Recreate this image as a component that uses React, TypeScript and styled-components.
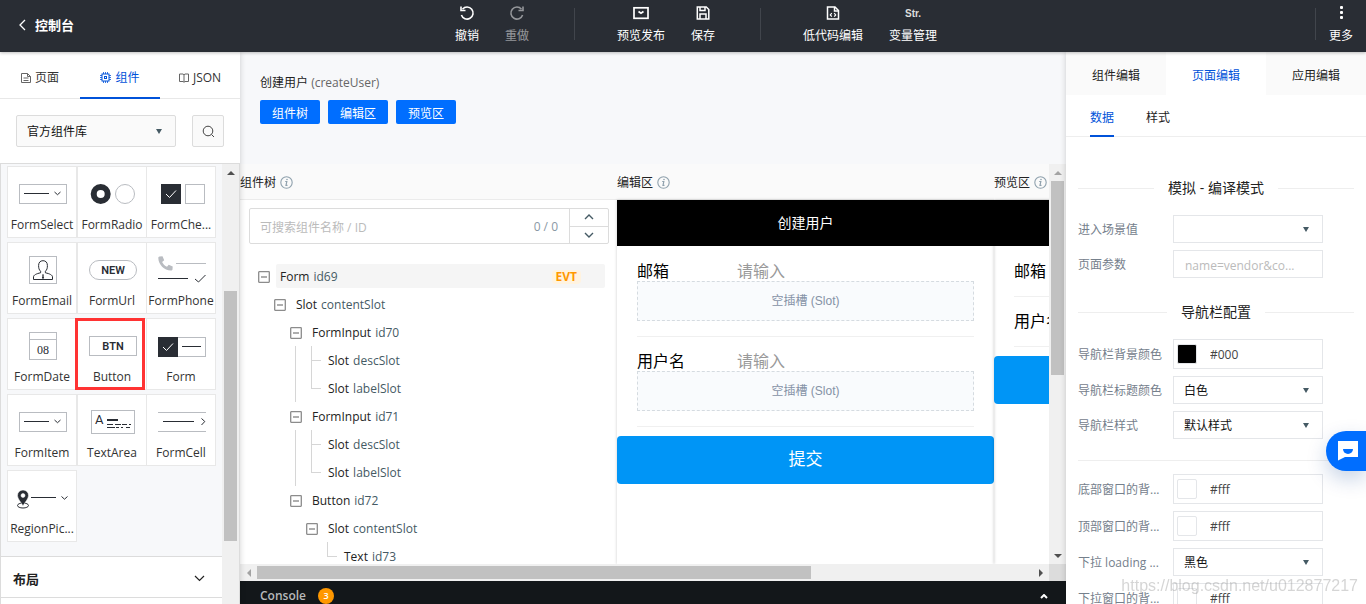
import React from "react";
import styled, { createGlobalStyle, css } from "styled-components";

const GlobalStyle = createGlobalStyle`
  * { box-sizing: border-box; }
  html, body { margin: 0; padding: 0; }
  body {
    font-family: "Open Sans", "Noto Sans CJK SC", sans-serif;
    font-size: 12px;
    line-height: 18px;
    color: #222;
    overflow: hidden;
  }
  button, input, select {
    font: inherit;
    color: inherit;
    margin: 0;
    padding: 0;
    border: 0;
    background: none;
    appearance: none;
    border-radius: 0;
    outline: none;
  }
  svg { display: block; flex: none; }
`;

const Page = styled.div`
  display: flex;
  flex-direction: column;
  height: 100vh;
`;

/* ---------- top bar ---------- */

const TopBar = styled.header`
  display: grid;
  grid-template-columns: 1fr auto 1fr;
  flex: 0 0 52px;
  background: #292d34;
  color: #fff;
  box-shadow: 0 1px 3px rgba(0, 0, 0, 0.25);
  position: relative;
  z-index: 3;
`;

const BackLink = styled.a`
  display: flex;
  align-items: center;
  gap: 8px;
  padding: 0 0 2px 18px;
  color: #fff;
  font-size: 13px;
  font-weight: 700;
  text-decoration: none;
`;

const ToolGroup = styled.div`
  display: flex;
  padding-left: 26px;
`;

const MoreGroup = styled.div`
  display: flex;
  justify-content: flex-end;
`;

const ToolButton = styled.button<{ $muted?: boolean }>`
  display: flex;
  flex-direction: column;
  align-items: center;
  justify-content: flex-start;
  gap: 6px;
  padding: 5px 13px 0;
  opacity: ${(p) => (p.$muted ? 0.5 : 1)};
  white-space: nowrap;
`;

const StrGlyph = styled.span`
  height: 16px;
  line-height: 18px;
  font-family: "Liberation Sans", sans-serif;
  font-size: 10px;
  font-weight: 700;
  color: #ddd;
`;

const ToolDivider = styled.span<{ $tight?: boolean }>`
  width: 1px;
  height: 32px;
  margin: ${(p) => (p.$tight ? "8px 0 0" : "8px 29px 0 32px")};
  background: #41454c;
`;

/* ---------- left panel ---------- */

const Body = styled.div`
  display: flex;
  flex: 1;
  min-height: 0;
`;

const LeftPanel = styled.aside`
  display: flex;
  flex-direction: column;
  flex: 0 0 240px;
  background: #fff;
  box-shadow: 0 0 6px rgba(0, 0, 0, 0.18);
  position: relative;
  z-index: 2;
`;

const LeftTabs = styled.nav`
  display: flex;
  flex: 0 0 47px;
  border-bottom: 1px solid #e8e8e8;
`;

const LeftTab = styled.button<{ $active?: boolean }>`
  display: flex;
  flex: 1;
  align-items: center;
  justify-content: center;
  gap: 4px;
  height: 47px;
  margin-bottom: -1px;
  padding-top: 6px;
  color: ${(p) => (p.$active ? "#0052d9" : "#333")};
  border-bottom: 2px solid ${(p) => (p.$active ? "#0052d9" : "transparent")};
`;

const LibraryBar = styled.div`
  display: flex;
  gap: 16px;
  padding: 16px;
`;

const SelectWrap = styled.div<{ $library?: boolean }>`
  display: flex;
  align-items: center;
  position: relative;
  flex: 1;
  height: ${(p) => (p.$library ? "32px" : "28px")};
  border: 1px solid ${(p) => (p.$library ? "#dcdcdc" : "#e4e6e9")};
  background: ${(p) => (p.$library ? "#fafafa" : "#fff")};
  border-radius: ${(p) => (p.$library ? "2px" : "0")};

  select {
    width: 100%;
    height: 100%;
    padding: 2px 28px 0 10px;
    color: #111;
  }

  svg {
    position: absolute;
    right: 13px;
    pointer-events: none;
  }
`;

const SearchButton = styled.button`
  display: flex;
  align-items: center;
  justify-content: center;
  width: 32px;
  height: 32px;
  border: 1px solid #dcdcdc;
  border-radius: 2px;
  background: #fafafa;
`;

const LeftScroll = styled.div`
  display: flex;
  flex: 1;
  min-height: 0;
  overflow: hidden;
  border: 1px solid #dcdcdc;
  border-bottom: 0;
`;

const LeftContent = styled.div`
  flex: 1;
  background: #f7f8fa;
`;

const CardGrid = styled.div`
  display: grid;
  grid-template-columns: 70px 70px 69px;
  row-gap: 4px;
  padding: 2px 0 14px 6px;
`;

const Card = styled.button<{ $marked?: boolean }>`
  display: flex;
  flex-direction: column;
  align-items: center;
  position: relative;
  width: 70px;
  height: 72px;
  border: 1px solid #e8e8e8;
  background: #fff;
  color: #333;
  white-space: nowrap;

  &:nth-child(3n) {
    margin-left: -1px;
  }

  ${(p) =>
    p.$marked &&
    css`
      z-index: 1;
      &::after {
        content: "";
        position: absolute;
        inset: -1px 1px -1px -3px;
        border: 3px solid #ff3333;
      }
    `}
`;

const SectionHeader = styled.button`
  display: flex;
  align-items: center;
  justify-content: space-between;
  width: 100%;
  height: 42px;
  padding: 3px 17px 0 12px;
  border-top: 1px solid #dcdcdc;
  border-bottom: 1px solid #dcdcdc;
  background: #fff;
  font-size: 13px;
  font-weight: 700;
`;

const SectionFill = styled.div`
  height: 60px;
  background: #fff;
`;

/* ---------- scrollbars ---------- */

const VBar = styled.div`
  display: flex;
  flex-direction: column;
  align-items: center;
  flex: 0 0 17px;
  background: #f0f0f0;
`;

const VTrack = styled.div<{ $offset?: number; $size: string }>`
  flex: 1;
  width: 13px;
  &::before {
    content: "";
    display: block;
    height: ${(p) => p.$size};
    margin-top: ${(p) => p.$offset ?? 0}px;
    background: #c1c1c1;
  }
`;

const HBar = styled.div`
  display: flex;
  align-items: center;
  flex: 0 0 17px;
  background: #f0f0f0;
`;

const HTrack = styled.div`
  flex: 1;
  &::before {
    content: "";
    display: block;
    width: 71.5%;
    height: 13px;
    background: #c1c1c1;
  }
`;

const ArrowCell = styled.span`
  display: flex;
  align-items: center;
  justify-content: center;
  flex: 0 0 17px;
  height: 17px;
`;

const Corner = styled.span`
  flex: 0 0 17px;
  height: 17px;
  background: #dcdcdc;
`;

/* ---------- centre ---------- */

const Center = styled.main`
  display: flex;
  flex-direction: column;
  flex: 1;
  min-width: 0;
  background: #f7f8fa;
`;

const PageHead = styled.div`
  flex: 0 0 112px;
  padding: 22px 20px 0;
`;

const PageTitle = styled.h1`
  margin: 0 0 8px;
  font-size: 12px;
  font-weight: 400;
  span { color: #666; }
`;

const AreaButtons = styled.div`
  display: flex;
  gap: 8px;
`;

const AreaButton = styled.button`
  height: 24px;
  width: 60px;
  padding-top: 4px;
  border-radius: 2px;
  background: #006eff;
  color: #fff;
`;

const Workspace = styled.div`
  display: flex;
  flex: 1;
  min-height: 0;
`;

const Areas = styled.div`
  display: flex;
  flex: 1;
  min-width: 0;
  overflow: hidden;
  background: #fff;
`;

const Area = styled.section`
  display: flex;
  flex-direction: column;
  flex: 0 0 377px;
`;

const AreaHead = styled.h2`
  display: flex;
  align-items: center;
  gap: 4px;
  flex: 0 0 36px;
  margin: 0;
  padding-top: 2px;
  background: #fafafa;
  font-size: 12px;
  font-weight: 400;
  border-bottom: 1px solid #ebebeb;
`;

const AreaBody = styled.div<{ $divided?: boolean }>`
  flex: 1;
  min-height: 0;
  overflow: hidden;
  box-shadow: ${(p) => (p.$divided ? "0 0 3px rgba(0, 0, 0, 0.2)" : "none")};
`;

const TreeSearch = styled.div`
  display: flex;
  align-items: center;
  height: 36px;
  margin: 8px 8px 18px 9px;
  border: 1px solid #dcdcdc;
  border-radius: 2px;

  input {
    flex: 1;
    min-width: 0;
    padding: 2px 0 0 10px;
    height: 34px;
  }
  input::placeholder { color: #bbb; opacity: 1; }
`;

const MatchCount = styled.span`
  padding: 2px 11px 0 0;
  color: #8a98a5;
`;

const Stepper = styled.div`
  display: flex;
  flex-direction: column;
  width: 39px;
  height: 34px;
  border-left: 1px solid #dcdcdc;

  button {
    display: flex;
    flex: 1;
    align-items: center;
    justify-content: center;
  }
  button + button { border-top: 1px solid #dcdcdc; }
`;

const TreeRow = styled.div`
  display: flex;
  align-items: center;
  height: 28px;
  padding: 0 12px 0 16px;
`;

const TreeCell = styled.span<{ $line?: "none" | "guide" | "mid" | "last" }>`
  flex: 0 0 16px;
  height: 28px;
  position: relative;
  ${(p) =>
    p.$line &&
    p.$line !== "none" &&
    css`
      &::before {
        content: "";
        position: absolute;
        left: 7px;
        top: 0;
        height: ${p.$line === "last" ? "14px" : "28px"};
        border-left: 1px solid #d6d6d6;
      }
    `}
  ${(p) =>
    (p.$line === "mid" || p.$line === "last") &&
    css`
      &::after {
        content: "";
        position: absolute;
        left: 7px;
        top: 14px;
        width: 10px;
        border-top: 1px solid #d6d6d6;
      }
    `}
`;

const Toggle = styled.button`
  display: flex;
  align-items: center;
  justify-content: center;
  flex: 0 0 16px;
  height: 28px;
  padding-top: 2px;
`;

const TreeLabel = styled.span<{ $selected?: boolean }>`
  display: flex;
  align-items: center;
  flex: 1;
  gap: 4px;
  height: 24px;
  margin-left: 4px;
  padding: 2px 24px 0 4px;
  border-radius: 2px;
  white-space: nowrap;
  background: ${(p) => (p.$selected ? "#f5f5f5" : "transparent")};
  em {
    font-style: normal;
    color: #455a64;
  }
`;

const EventTag = styled.span`
  margin-left: auto;
  padding: 0 4px;
  line-height: 14px;
  border-radius: 4px;
  background: #fff3e0;
  color: #ff9800;
  font-weight: 700;
`;

/* ---------- simulated phone ---------- */

const PhoneBar = styled.div`
  height: 46px;
  line-height: 46px;
  background: #000;
  color: #fff;
  font-size: 14px;
  text-align: center;
`;

const PhoneForm = styled.form`
  padding-top: 1px;
  font-size: 16px;
`;

const PhoneField = styled.div`
  display: flex;
  flex-wrap: wrap;
  margin: 0 20px;
  padding: 14px 0 15px;
  border-bottom: 1px solid #f0f0f0;
  line-height: 20px;
  color: #000;

  label { width: 100px; }
  input {
    flex: 1;
    min-width: 0;
    height: 20px;
  }
  input::placeholder { color: #999; opacity: 1; }
`;

const EmptySlot = styled.div`
  flex: 0 0 100%;
  height: 40px;
  line-height: 38px;
  border: 1px dashed #d5dbe0;
  background: #f9fbfd;
  color: #8592a6;
  font-family: "Liberation Sans", "Noto Sans CJK SC", sans-serif;
  font-size: 12px;
  text-align: center;
`;

const SubmitButton = styled.button`
  width: 100%;
  height: 48px;
  margin-top: 9px;
  padding-bottom: 2px;
  border-radius: 4px;
  background: #0095f6;
  color: #fff;
  font-size: 17px;
`;

const Console = styled.footer`
  display: flex;
  align-items: center;
  gap: 12px;
  flex: 0 0 23px;
  padding: 7px 18px 0 20px;
  background: #13171a;
  color: #b8babb;
  font-weight: 600;
  line-height: 16px;

  button { margin-left: auto; }
`;

const Badge = styled.span`
  width: 16px;
  height: 16px;
  line-height: 16px;
  border-radius: 8px;
  background: #ff9800;
  color: #fff;
  font-size: 9px;
  text-align: center;
`;

/* ---------- right panel ---------- */

const RightPanel = styled.aside`
  display: flex;
  flex-direction: column;
  flex: 0 0 300px;
  background: #fff;
  overflow: hidden;
  box-shadow: 0 0 6px rgba(0, 0, 0, 0.18);
  position: relative;
  z-index: 2;
`;

const RightTabs = styled.nav`
  display: flex;
  flex: 0 0 43px;
`;

const RightTab = styled.button<{ $active?: boolean }>`
  flex: 1;
  padding-top: 4px;
  background: ${(p) => (p.$active ? "#fff" : "#fafafa")};
  color: ${(p) => (p.$active ? "#0052d9" : "#222")};
`;

const SubTabs = styled.nav`
  display: flex;
  gap: 32px;
  flex: 0 0 42px;
  padding-left: 24px;
  border-bottom: 1px solid #eee;
`;

const SubTab = styled.button<{ $active?: boolean }>`
  height: 42px;
  margin-bottom: -1px;
  padding-top: 6px;
  color: ${(p) => (p.$active ? "#0052d9" : "#222")};
  border-bottom: 2px solid ${(p) => (p.$active ? "#0052d9" : "transparent")};
`;

const Settings = styled.div`
  flex: 1;
  min-height: 0;
  overflow: hidden;
  padding: 17px 12px 0;
`;

const GroupTitle = styled.h3`
  display: flex;
  align-items: center;
  gap: 14px;
  margin: 0;
  padding: 24px 0 17px;
  font-size: 14px;
  font-weight: 400;
  line-height: 20px;

  &::before, &::after {
    content: "";
    flex: 1;
    border-top: 1px solid #eee;
  }
`;

const Group = styled.div`
  display: flex;
  flex-direction: column;
  gap: 7px;
`;

const GroupRule = styled.hr`
  height: 1px;
  margin: 21px 0 13px;
  border: 0;
  background: #eee;
`;

const SettingRow = styled.div`
  display: flex;
  align-items: center;
  padding-right: 31px;
  > label {
    flex: 0 0 95px;
    padding-top: 2px;
    color: #75808c;
    white-space: nowrap;
  }
`;

const TextField = styled.input`
  flex: 1;
  min-width: 0;
  height: 28px;
  padding: 2px 11px 0;
  border: 1px solid #e4e6e9;
  &::placeholder { color: #bbb; opacity: 1; }
`;

const ColorField = styled.div`
  display: flex;
  align-items: center;
  flex: 1;
  min-width: 0;
  gap: 13px;
  height: 30px;
  padding-left: 3px;
  border: 1px solid #e4e6e9;
  input {
    flex: 1;
    min-width: 0;
    height: 26px;
    color: #444;
  }
`;

const Swatch = styled.span<{ $color: string }>`
  width: 20px;
  height: 20px;
  border: 1px solid #e4e6e9;
  border-radius: 2px;
  background: ${(p) => p.$color};
`;

const ChatButton = styled.button`
  position: fixed;
  right: 0;
  top: 431px;
  z-index: 4;
  display: flex;
  align-items: center;
  width: 40px;
  height: 40px;
  padding-left: 12px;
  border-radius: 20px 0 0 20px;
  background: #006eff;
  box-shadow: 0 8px 20px rgba(0, 60, 140, 0.22);
`;

const Watermark = styled.span`
  position: fixed;
  right: 8px;
  bottom: 8px;
  z-index: 5;
  color: rgba(150, 150, 150, 0.4);
  font-family: "Liberation Sans", sans-serif;
  font-size: 16px;
  line-height: 20px;
  pointer-events: none;
`;

/* ---------- drawings ---------- */

const DARK = "#292d34";
const GRAY = "#b9bcc1";

type Direction = "up" | "down" | "left" | "right";

const arrowPoints: Record<Direction, string> = {
  up: "0,6 4,2 8,6",
  down: "0,2 4,6 8,2",
  left: "6,0 2,4 6,8",
  right: "2,0 6,4 2,8",
};

const Arrow = ({ dir, color = "#505050" }: { dir: Direction; color?: string }) => (
  <ArrowCell>
    <svg width="8" height="8">
      <polygon points={arrowPoints[dir]} fill={color} />
    </svg>
  </ArrowCell>
);

const Caret = () => (
  <svg width="6" height="6">
    <path d="M0 1h6l-3 5z" fill="#455a64" />
  </svg>
);

const Chevron = ({ up, w = 9, color = "#455a64", stroke = 1.4 }: { up?: boolean; w?: number; color?: string; stroke?: number }) => {
  const h = w / 2;
  return (
    <svg width={w + 2} height={h + 2} fill="none" stroke={color} strokeWidth={stroke}>
      <path d={up ? `M1 ${h + 1}L${1 + w / 2} 1L${w + 1} ${h + 1}` : `M1 1L${1 + w / 2} ${h + 1}L${w + 1} 1`} />
    </svg>
  );
};

const Info = () => (
  <svg width="13" height="13" fill="none" stroke="#8fa1ad">
    <circle cx="6.5" cy="6.5" r="5.7" strokeWidth="1.1" />
    <path d="M5.2 5.5h1.6L6 9.4h1.5" strokeWidth="1.2" />
    <circle cx="7" cy="3.5" r="0.8" fill="#8fa1ad" stroke="none" />
  </svg>
);

const Minus = () => (
  <svg width="12" height="12" fill="none" stroke="#8c8c8c">
    <rect x="0.7" y="0.7" width="10.6" height="10.6" strokeWidth="1.3" rx="0.5" />
    <path d="M3 6h6" strokeWidth="1.4" />
  </svg>
);

const art: Record<string, React.ReactNode> = {
  select: (
    <>
      <rect x="11.5" y="17.5" width="47" height="19" stroke={GRAY} />
      <path d="M16 26.5h25M46.5 25l3 2.7 3-2.7" stroke={DARK} />
    </>
  ),
  radio: (
    <>
      <circle cx="22.7" cy="27" r="7" stroke={DARK} strokeWidth="6" />
      <circle cx="47" cy="27" r="9.5" stroke={GRAY} />
    </>
  ),
  check: (
    <>
      <rect x="14" y="17" width="20" height="20" fill={DARK} />
      <path d="M19 27l3.5 3.5 6.5-7" stroke="#fff" />
      <rect x="38.5" y="17.5" width="19" height="19" stroke={GRAY} />
    </>
  ),
  email: (
    <>
      <rect x="21.5" y="13.5" width="27" height="27" stroke={GRAY} />
      <path
        d="M32.6 28.2C31 27 30.6 25 30.6 22.5c0-3 1.6-4.8 4.4-4.8s4.4 1.8 4.4 4.8c0 2.5-.4 4.5-2 5.7v1.6c4.2.9 7.1 2.2 7.1 4.2v2.5H25.5V34c0-2 2.9-3.3 7.1-4.2z"
        stroke={DARK}
      />
      <path d="M34 31.5h2l-.5 1.5.6 2-1.1 1-1.1-1 .6-2z" fill={DARK} />
    </>
  ),
  url: (
    <>
      <rect x="11.5" y="17.5" width="47" height="19" rx="9.5" stroke={GRAY} />
      <text x="35" y="31" textAnchor="middle" fontSize="11" fontWeight="600" fontFamily="Roboto, sans-serif" fill={DARK}>NEW</text>
    </>
  ),
  phone: (
    <>
      <path
        d="M12.5 13.5l3-.3 1.7 4-2.1 1.7c1.2 2.3 2.7 3.8 4.9 4.9l1.7-2.1 4 1.7-.2 3.2c-.2.7-.8 1-1.5 1C17 27.500 11.5 21.5 11.3 15c0-.8.4-1.4 1.2-1.5z"
        fill={GRAY}
      />
      <path d="M29 20.5h30" stroke={GRAY} />
      <path d="M11 35.5h30M48 36l3.5 3 7-7" stroke={DARK} />
    </>
  ),
  date: (
    <>
      <rect x="21.5" y="13.5" width="27" height="27" stroke={GRAY} />
      <path d="M21.5 20.5h27" stroke={GRAY} />
      <text x="35" y="35" textAnchor="middle" fontSize="12" fontFamily="Liberation Serif, serif" fill={DARK}>08</text>
    </>
  ),
  button: (
    <>
      <rect x="11.5" y="17.5" width="47" height="19" stroke={GRAY} />
      <text x="35" y="31" textAnchor="middle" fontSize="11" fontWeight="600" fontFamily="Roboto, sans-serif" fill={DARK}>BTN</text>
    </>
  ),
  form: (
    <>
      <rect x="30.5" y="18.5" width="28" height="19" stroke={GRAY} />
      <rect x="11" y="18" width="20" height="20" fill={DARK} />
      <path d="M16 28l3.5 3.5 6.5-7" stroke="#fff" />
      <path d="M35 27.5h19" stroke={DARK} />
    </>
  ),
  textarea: (
    <>
      <rect x="13.5" y="15.5" width="43" height="23" stroke={GRAY} />
      <text x="17" y="29" fontSize="13" fontFamily="Roboto, sans-serif" fill={DARK}>A</text>
      <path d="M29 25h11" stroke={DARK} strokeWidth="2" />
      <path d="M29 29.5h6m2 0h6m1 0h5m2 0h2M29 32.5h8m1 0h3m2 0h2m3 0h4" stroke={DARK} />
    </>
  ),
  cell: (
    <>
      <path d="M11 17.5h48M11 36.5h48" stroke={GRAY} />
      <path d="M16 26.5h31M54.5 23.5l3.3 3-3.3 3.500" stroke={DARK} />
    </>
  ),
  region: (
    <>
      <ellipse cx="15" cy="34.5" rx="5.5" ry="2.5" stroke={DARK} />
      <path
        d="M15 35c-2-4-5.500-7-5.500-10.500a5.500 5.500 0 0 1 11 0c0 3.500-3.500 6.500-5.500 10.500zm0-12.500a2 2 0 1 0 0 4 2 2 0 0 0 0-4z"
        fill={DARK}
        stroke="#fff"
        strokeWidth="0.5"
        fillRule="evenodd"
      />
      <path d="M23 26.5h25M53.5 25.5l3 2.7 3-2.7" stroke={DARK} />
    </>
  ),
};

const cards: { name: string; kind: string; marked?: boolean }[] = [
  { name: "FormSelect", kind: "select" },
  { name: "FormRadio", kind: "radio" },
  { name: "FormChe...", kind: "check" },
  { name: "FormEmail", kind: "email" },
  { name: "FormUrl", kind: "url" },
  { name: "FormPhone", kind: "phone" },
  { name: "FormDate", kind: "date" },
  { name: "Button", kind: "button", marked: true },
  { name: "Form", kind: "form" },
  { name: "FormItem", kind: "select" },
  { name: "TextArea", kind: "textarea" },
  { name: "FormCell", kind: "cell" },
  { name: "RegionPic...", kind: "region" },
];

type Line = "none" | "guide" | "mid" | "last";
interface Node {
  type: string;
  id: string;
  cells: Line[];
  leaf?: boolean;
  selected?: boolean;
}

const tree: Node[] = [
  { type: "Form", id: "id69", cells: [], selected: true },
  { type: "Slot", id: "contentSlot", cells: ["none"] },
  { type: "FormInput", id: "id70", cells: ["none", "none"] },
  { type: "Slot", id: "descSlot", cells: ["none", "none", "guide", "mid"], leaf: true },
  { type: "Slot", id: "labelSlot", cells: ["none", "none", "guide", "last"], leaf: true },
  { type: "FormInput", id: "id71", cells: ["none", "none"] },
  { type: "Slot", id: "descSlot", cells: ["none", "none", "guide", "mid"], leaf: true },
  { type: "Slot", id: "labelSlot", cells: ["none", "none", "guide", "last"], leaf: true },
  { type: "Button", id: "id72", cells: ["none", "none"] },
  { type: "Slot", id: "contentSlot", cells: ["none", "none", "none"] },
  { type: "Text", id: "id73", cells: ["none", "none", "none", "none", "last"], leaf: true },
];

const Phone = ({ prefix, slots }: { prefix: string; slots?: boolean }) => (
  <AreaBody $divided>
    <PhoneBar>{slots ? "创建用户" : ""}</PhoneBar>
    <PhoneForm onSubmit={(e) => e.preventDefault()}>
      {["邮箱", "用户名"].map((name) => (
        <PhoneField key={name}>
          <label htmlFor={prefix + name}>{name}</label>
          <input id={prefix + name} placeholder="请输入" />
          {slots && <EmptySlot>空插槽 (Slot)</EmptySlot>}
        </PhoneField>
      ))}
      <SubmitButton type="submit" aria-label="提交">{slots ? "提交" : ""}</SubmitButton>
    </PhoneForm>
  </AreaBody>
);

const SelectSetting = ({ label, value }: { label: string; value: string }) => (
  <SettingRow>
    <label htmlFor={label}>{label}</label>
    <SelectWrap>
      <select id={label} defaultValue={value}>
        <option value={value}>{value}</option>
      </select>
      <Caret />
    </SelectWrap>
  </SettingRow>
);

const ColorSetting = ({ label, value }: { label: string; value: string }) => (
  <SettingRow>
    <label htmlFor={label}>{label}</label>
    <ColorField>
      <Swatch $color={value} />
      <input id={label} defaultValue={value} />
    </ColorField>
  </SettingRow>
);

export default function App() {
  return (
    <Page>
      <GlobalStyle />
      <TopBar>
        <BackLink href="#">
          <svg width="9" height="12" fill="none" stroke="#fff" strokeWidth="1.3">
            <path d="M7 1L2 6l5 5" />
          </svg>
          控制台
        </BackLink>
        <ToolGroup>
          <ToolButton>
            <svg width="16" height="16" fill="none" stroke="#fff" strokeWidth="1.6">
              <path d="M3.5 4.2A6 6 0 1 1 2.4 10" />
              <path d="M2 1.5v4h4.5" />
            </svg>
            撤销
          </ToolButton>
          <ToolButton $muted>
            <svg width="16" height="16" fill="none" stroke="#fff" strokeWidth="1.6">
              <path d="M12.5 4.2A6 6 0 1 0 13.6 10" />
              <path d="M14 1.5v4H9.5" />
            </svg>
            重做
          </ToolButton>
          <ToolDivider />
          <ToolButton>
            <svg width="16" height="16" fill="none" stroke="#fff" strokeWidth="1.7">
              <rect x="1" y="2.8" width="14" height="10.5" />
              <path d="M5.5 6.5L8 8.3l2.5-1.8" />
            </svg>
            预览发布
          </ToolButton>
          <ToolButton>
            <svg width="16" height="16" fill="none" stroke="#fff" strokeWidth="1.5">
              <path d="M2.3 2h9l2.5 2.5V14H2.3z" />
              <path d="M5 2v3.5h5V2M5 14V9h6v5" />
            </svg>
            保存
          </ToolButton>
          <ToolDivider />
          <ToolButton>
            <svg width="16" height="16" fill="none" stroke="#fff" strokeWidth="1.5">
              <path d="M2.5 2H10l3.5 3.5V14h-11z" />
              <path d="M9.5 2v4h4" />
              <path d="M6.8 8.2L5.3 9.9l1.5 1.7M9.2 8.2l1.5 1.7-1.5 1.7" strokeWidth="1.2" />
            </svg>
            低代码编辑
          </ToolButton>
          <ToolButton>
            <StrGlyph>Str.</StrGlyph>
            变量管理
          </ToolButton>
        </ToolGroup>
        <MoreGroup>
          <ToolDivider $tight />
          <ToolButton>
            <svg width="16" height="16" fill="#fff">
              <rect x="7" y="1" width="3" height="3" rx="1" />
              <rect x="7" y="6" width="3" height="3" rx="1" />
              <rect x="7" y="11" width="3" height="3" rx="1" />
            </svg>
            更多
          </ToolButton>
        </MoreGroup>
      </TopBar>

      <Body>
        <LeftPanel>
          <LeftTabs>
            <LeftTab>
              <svg width="10" height="10" fill="none" stroke="#666">
                <path d="M.5.5h6l3 3v6h-9zM6.5.5v3h3M2.5 5h5M2.5 7.5h5" />
              </svg>
              页面
            </LeftTab>
            <LeftTab $active>
              <svg width="11" height="11" fill="none" stroke="#0052d9">
                <rect x="2" y="2" width="7" height="7" />
                <rect x="4.5" y="4.5" width="2" height="2" />
                <path d="M3.5 0v2M5.5 0v2M7.5 0v2M3.5 9v2M5.5 9v2M7.5 9v2M0 3.5h2M0 5.5h2M0 7.5h2M9 3.5h2M9 5.5h2M9 7.5h2" strokeWidth="0.8" />
              </svg>
              组件
            </LeftTab>
            <LeftTab>
              <svg width="10" height="10" fill="none" stroke="#666">
                <path d="M.5 1H4l1 .8L6 1h3.500v7.500H6L5 9.300l-1-.8H.5zM5 2v7" />
              </svg>
              JSON
            </LeftTab>
          </LeftTabs>
          <LibraryBar>
            <SelectWrap $library>
              <select aria-label="组件库" defaultValue="官方组件库">
                <option>官方组件库</option>
              </select>
              <Caret />
            </SelectWrap>
            <SearchButton aria-label="搜索">
              <svg width="13" height="13" fill="none" stroke="#444">
                <circle cx="6" cy="6" r="4.8" />
                <path d="M9.5 9.5l2.5 2.5" />
              </svg>
            </SearchButton>
          </LibraryBar>
          <LeftScroll>
            <LeftContent>
              <CardGrid>
                {cards.map((c) => (
                  <Card key={c.name} $marked={c.marked}>
                    <svg width="68" height="49" viewBox="0 0 68 49" fill="none">
                      {art[c.kind]}
                    </svg>
                    {c.name}
                  </Card>
                ))}
              </CardGrid>
              <SectionHeader>
                布局
                <Chevron w={9} color="#222" stroke={1.2} />
              </SectionHeader>
              <SectionFill />
            </LeftContent>
            <VBar>
              <Arrow dir="up" />
              <VTrack $offset={110} $size="250px" />
            </VBar>
          </LeftScroll>
        </LeftPanel>

        <Center>
          <PageHead>
            <PageTitle>
              创建用户 <span>(createUser)</span>
            </PageTitle>
            <AreaButtons>
              <AreaButton>组件树</AreaButton>
              <AreaButton>编辑区</AreaButton>
              <AreaButton>预览区</AreaButton>
            </AreaButtons>
          </PageHead>
          <Workspace>
            <Areas>
              <Area>
                <AreaHead>组件树 <Info /></AreaHead>
                <AreaBody>
                  <TreeSearch>
                    <input aria-label="搜索组件" placeholder="可搜索组件名称 / ID" />
                    <MatchCount>0 / 0</MatchCount>
                    <Stepper>
                      <button aria-label="上一个"><Chevron up w={8} /></button>
                      <button aria-label="下一个"><Chevron w={8} /></button>
                    </Stepper>
                  </TreeSearch>
                  {tree.map((n, i) => (
                    <TreeRow key={i}>
                      {n.cells.map((line, k) => (
                        <TreeCell key={k} $line={line} />
                      ))}
                      {!n.leaf && <Toggle aria-label="折叠"><Minus /></Toggle>}
                      <TreeLabel $selected={n.selected}>
                        {n.type} <em>{n.id}</em>
                        {n.selected && <EventTag>EVT</EventTag>}
                      </TreeLabel>
                    </TreeRow>
                  ))}
                </AreaBody>
              </Area>
              <Area>
                <AreaHead>编辑区 <Info /></AreaHead>
                <Phone prefix="edit-" slots />
              </Area>
              <Area>
                <AreaHead>预览区 <Info /></AreaHead>
                <Phone prefix="preview-" />
              </Area>
            </Areas>
            <VBar>
              <Arrow dir="up" color="#a3a3a3" />
              <VTrack $size="53%" />
              <Arrow dir="down" />
            </VBar>
          </Workspace>
          <HBar>
            <Arrow dir="left" color="#a3a3a3" />
            <HTrack />
            <Arrow dir="right" />
            <Corner />
          </HBar>
          <Console>
            Console <Badge>3</Badge>
            <button aria-label="展开"><Chevron up w={6} color="#fff" stroke={2} /></button>
          </Console>
        </Center>

        <RightPanel>
          <RightTabs>
            <RightTab>组件编辑</RightTab>
            <RightTab $active>页面编辑</RightTab>
            <RightTab>应用编辑</RightTab>
          </RightTabs>
          <SubTabs>
            <SubTab $active>数据</SubTab>
            <SubTab>样式</SubTab>
          </SubTabs>
          <Settings>
            <GroupTitle>模拟 - 编译模式</GroupTitle>
            <Group>
              <SelectSetting label="进入场景值" value="" />
              <SettingRow>
                <label htmlFor="params">页面参数</label>
                <TextField id="params" placeholder="name=vendor&co..." />
              </SettingRow>
            </Group>
            <GroupTitle>导航栏配置</GroupTitle>
            <Group>
              <ColorSetting label="导航栏背景颜色" value="#000" />
              <SelectSetting label="导航栏标题颜色" value="白色" />
              <SelectSetting label="导航栏样式" value="默认样式" />
            </Group>
            <GroupRule />
            <Group>
              <ColorSetting label="底部窗口的背..." value="#fff" />
              <ColorSetting label="顶部窗口的背..." value="#fff" />
              <SelectSetting label="下拉 loading ..." value="黑色" />
              <ColorSetting label="下拉窗口的背..." value="#fff" />
            </Group>
          </Settings>
        </RightPanel>
      </Body>

      <ChatButton aria-label="在线客服">
        <svg width="20" height="20">
          <path d="M0 0h20v16H7l-7 3.5z" fill="#fff" />
          <path d="M5 8h10a5 5 0 0 1-10 0z" fill="#006eff" />
        </svg>
      </ChatButton>
      <Watermark>https://blog.csdn.net/u012877217</Watermark>
    </Page>
  );
}
